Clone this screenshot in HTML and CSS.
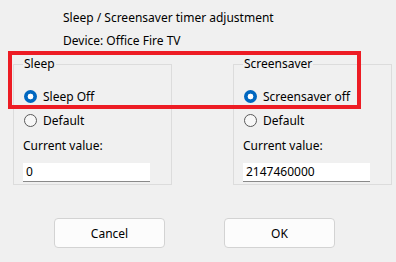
FILE: index.html
```html
<!DOCTYPE html>
<html lang="en">
<head>
    <meta charset="UTF-8">
    <title>Sleep / Screensaver timer adjustment</title>
    <link rel="stylesheet" href="styles.css">
</head>
<body>
    <div class="dialog">
        <!-- Header -->
        <div class="header">
            <div class="header-line">Sleep / Screensaver timer adjustment</div>
            <div class="header-line">Device: Office Fire TV</div>
        </div>

        <!-- Settings groups -->
        <div class="groups">
            <fieldset class="group">
                <legend>Sleep</legend>
                <div class="radio-row"><span class="radio checked"></span>Sleep Off</div>
                <div class="radio-row"><span class="radio"></span>Default</div>
                <div class="field-label">Current value:</div>
                <div class="value-box">0</div>
            </fieldset>

            <fieldset class="group">
                <legend>Screensaver</legend>
                <div class="radio-row"><span class="radio checked"></span>Screensaver off</div>
                <div class="radio-row"><span class="radio"></span>Default</div>
                <div class="field-label">Current value:</div>
                <div class="value-box">2147460000</div>
            </fieldset>
        </div>

        <!-- Buttons -->
        <div class="buttons">
            <button class="btn">Cancel</button>
            <button class="btn">OK</button>
        </div>

        <!-- Highlight box drawn over the screenshot -->
        <div class="highlight"></div>
    </div>
</body>
</html>
```

FILE: styles.css
```css
/* General Styles */

body {
    margin: 0;
    background-color: #f0f0f0;
    color: #000;
    font-family: "Noto Sans", "Open Sans", sans-serif;
    font-size: 12px;
}

.dialog {
    position: relative;
    width: 396px;
    height: 262px;
    padding-top: 10px;
    box-sizing: border-box;
}

.header {
    padding-left: 63px;
}

.header-line {
    line-height: 16px;
    margin-bottom: 7px;
}

/* Groups */
.groups {
    display: flex;
    gap: 61px;
    padding-left: 13px;
    margin-top: 1px;
}

.group {
    width: 159px;
    box-sizing: border-box;
    margin: 0;
    padding: 12px 0 2px 9px;
    border: 1px solid #dcdcdc;
    border-radius: 0;
}

.group legend {
    padding: 0 1px;
    line-height: 16px;
}

.radio-row {
    display: flex;
    align-items: center;
    height: 24px;
}

.radio {
    width: 13px;
    height: 13px;
    box-sizing: border-box;
    border: 1px solid #5a5a5a;
    border-radius: 50%;
    background: #f7f7f7;
    margin-right: 6px;
    margin-left: 1px;
}

.radio.checked {
    border: none;
    background: radial-gradient(circle, #fff 0, #fff 2.6px, #0067c0 3.2px);
}

.field-label {
    line-height: 16px;
    margin-top: 6px;
}

.value-box {
    width: 127px;
    height: 19px;
    box-sizing: border-box;
    margin-top: 9px;
    padding-left: 3px;
    line-height: 18px;
    background: #fff;
    border-bottom: 1px solid #8a8a8a;
}

.highlight {
    position: absolute;
    left: 8px;
    top: 51px;
    width: 353px;
    height: 58px;
    box-sizing: border-box;
    border: 4px solid #ed1c24;
}

/* Buttons */
.buttons {
    display: flex;
    gap: 59px;
    padding-left: 54px;
    margin-top: 33px;
}

.btn {
    width: 111px;
    height: 30px;
    background: #fcfcfc;
    border: 1px solid #d3d3d3;
    border-radius: 4px;
    font-family: "Noto Sans", "Open Sans", sans-serif;
    font-size: 12px;
    color: #000;
}
```
